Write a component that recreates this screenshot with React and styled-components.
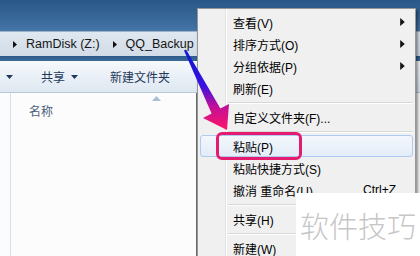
import styled, { createGlobalStyle } from "styled-components";

const GlobalStyle = createGlobalStyle`
  html, body {
    margin: 0;
    padding: 0;
    width: 420px;
    height: 256px;
    overflow: hidden;
    background: #fcfcfc;
  }
`;

const FONT = `"Liberation Sans", "Noto Sans CJK SC", sans-serif`;

const Window = styled.div`
  position: relative;
  width: 420px;
  height: 256px;
  display: flex;
  flex-direction: column;
  overflow: hidden;
  font-family: ${FONT};
`;

const TitleBar = styled.div`
  height: 31px;
  flex: none;
  background: linear-gradient(180deg, #2a5787 0%, #386899 60%, #4576a7 100%);
`;

const AddressBar = styled.div`
  height: 25px;
  flex: none;
  display: flex;
  align-items: center;
  gap: 9px;
  padding-left: 13px;
  background: linear-gradient(180deg, #dfe7ef 0%, #d2dce7 100%);
  border-top: 1px solid #9fb3c8;
  box-sizing: border-box;
  font-size: 12.5px;
  color: #151515;
`;

const Crumb = styled.span`
  margin-right: 4px;
  white-space: nowrap;
`;

const Strip = styled.div`
  height: 5px;
  flex: none;
  background: linear-gradient(180deg, #2d5b89, #3b6a9a);
`;

const Toolbar = styled.div`
  height: 32px;
  flex: none;
  display: flex;
  align-items: center;
  padding-left: 6px;
  box-sizing: border-box;
  background: linear-gradient(180deg, #f6f9fc 0%, #eaf0f7 50%, #dee7f1 100%);
  border-bottom: 1px solid #b9c9da;
  font-size: 12px;
  color: #1e395b;
`;

const ToolButton = styled.span`
  display: flex;
  align-items: center;
  gap: 6px;
  margin-left: ${(p) => p.offset}px;
  white-space: nowrap;
`;

const Content = styled.div`
  flex: 1;
  display: flex;
  background: #fcfcfc;
`;

const NavPane = styled.div`
  width: 10px;
  flex: none;
  background: #fbfcfe;
  border-right: 1px solid #d3e2f1;
`;

const FileList = styled.div`
  width: 185px;
  flex: none;
  position: relative;
  border-right: 1px solid #6b6b6b;
`;

const ColumnHeader = styled.div`
  height: 30px;
  display: flex;
  align-items: center;
  padding: 2px 0 0 18px;
  font-size: 12px;
  color: #4c607a;
`;

const SortArrow = styled.svg`
  position: absolute;
  left: 141px;
  top: 3px;
`;

const Menu = styled.div`
  position: absolute;
  left: 197px;
  top: 8px;
  width: 219px;
  height: 270px;
  box-sizing: border-box;
  padding: 2px;
  border: 1px solid #979797;
  background: linear-gradient(
      to right,
      transparent 27px,
      #e2e3e3 27px,
      #e2e3e3 28px,
      #ffffff 28px,
      #ffffff 29px,
      transparent 29px
    ),
    #f0f0f0;
  box-shadow: 2px 2px 3px rgba(0, 0, 0, 0.45);
  font-size: 12px;
  color: #000;
`;

const Item = styled.div`
  height: 22px;
  display: flex;
  align-items: center;
  justify-content: space-between;
  padding: 0 7px 0 32px;
  box-sizing: border-box;
  border: 1px solid ${(p) => (p.active ? "#aeccf1" : "transparent")};
  border-radius: 3px;
  background: ${(p) =>
    p.active ? "linear-gradient(180deg, #f3f7fc 0%, #e3ecf8 100%)" : "none"};
  white-space: nowrap;
`;

const Shortcut = styled.span`
  margin-right: 9px;
`;

const Separator = styled.div`
  height: 7px;
  margin-left: 28px;
  display: flex;
  flex-direction: column;
  justify-content: center;

  &::before {
    content: "";
    height: 1px;
    background: #d7d7d7;
  }
  &::after {
    content: "";
    height: 1px;
    background: #ffffff;
  }
`;

const Highlight = styled.div`
  position: absolute;
  left: 216px;
  top: 132px;
  width: 86px;
  height: 28px;
  box-sizing: border-box;
  border: 3px solid #e41b6f;
  border-radius: 6px;
`;

const Pointer = styled.svg`
  position: absolute;
  left: 0;
  top: 0;
  pointer-events: none;
`;

const Watermark = styled.div`
  position: absolute;
  left: 296px;
  top: 193px;
  width: 124px;
  height: 63px;
  display: flex;
  align-items: center;
  padding-left: 4px;
  box-sizing: border-box;
  background: #ffffff;
  font-family: "Noto Sans CJK SC", sans-serif;
  font-weight: 300;
  font-size: 29px;
  color: #c6c6c6;
  white-space: nowrap;
`;

function Caret({ color = "#1e395b" }) {
  return (
    <svg width="7" height="4" viewBox="0 0 7 4">
      <path d="M0 0H7L3.5 4Z" fill={color} />
    </svg>
  );
}

function RightTri({ w = 4, h = 7 }) {
  return (
    <svg width={w} height={h} viewBox="0 0 4 7">
      <path d="M0 0L4 3.5L0 7Z" fill="#111" />
    </svg>
  );
}

const menu = [
  { label: "查看(V)", sub: true },
  { label: "排序方式(O)", sub: true },
  { label: "分组依据(P)", sub: true },
  { label: "刷新(E)" },
  "sep",
  { label: "自定义文件夹(F)..." },
  "sep",
  { label: "粘贴(P)", active: true },
  { label: "粘贴快捷方式(S)" },
  { label: "撤消 重命名(U)", key: "Ctrl+Z" },
  "sep",
  { label: "共享(H)" },
  "sep",
  { label: "新建(W)" },
];

export default function App() {
  return (
    <>
      <GlobalStyle />
      <Window>
        <TitleBar />
        <AddressBar>
          <RightTri />
          <Crumb>RamDisk (Z:)</Crumb>
          <RightTri />
          <Crumb>QQ_Backup</Crumb>
        </AddressBar>
        <Strip />
        <Toolbar>
          <Caret />
          <ToolButton offset={28}>
            共享 <Caret />
          </ToolButton>
          <ToolButton offset={32}>新建文件夹</ToolButton>
        </Toolbar>
        <Content>
          <NavPane />
          <FileList>
            <SortArrow width="9" height="5" viewBox="0 0 9 5">
              <path d="M0 5L4.5 0L9 5Z" fill="#a9bfd6" />
            </SortArrow>
            <ColumnHeader>名称</ColumnHeader>
          </FileList>
        </Content>

        <Menu>
          {menu.map((m, i) =>
            m === "sep" ? (
              <Separator key={i} />
            ) : (
              <Item key={i} active={m.active}>
                <span>{m.label}</span>
                {m.sub && <RightTri w={5} h={8} />}
                {m.key && <Shortcut>{m.key}</Shortcut>}
              </Item>
            )
          )}
        </Menu>

        <Pointer width="420" height="256" viewBox="0 0 420 256">
          <defs>
            <linearGradient id="arrowGrad" x1="0" y1="50" x2="0" y2="130" gradientUnits="userSpaceOnUse">
              <stop offset="0" stopColor="#0a18d6" />
              <stop offset="0.45" stopColor="#3a10e0" />
              <stop offset="0.7" stopColor="#c0109a" />
              <stop offset="1" stopColor="#ff1466" />
            </linearGradient>
          </defs>
          <polygon
            points="184,50.5 186,49.5 220.4,108.6 229,104 227,130 203,118 211.6,113.4"
            fill="url(#arrowGrad)"
          />
        </Pointer>

        <Highlight />
        <Watermark>软件技巧</Watermark>
      </Window>
    </>
  );
}
